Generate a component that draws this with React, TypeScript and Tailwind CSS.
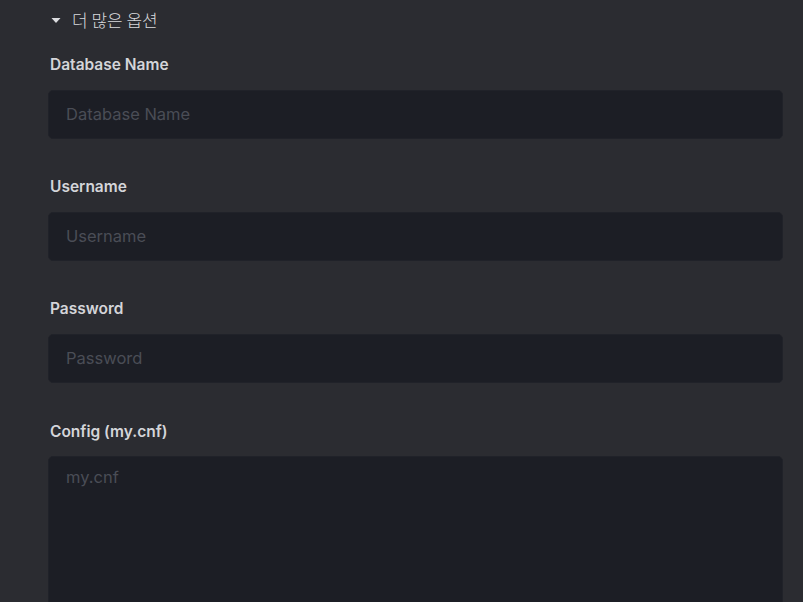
import { useState } from 'react';

const fields = [
    { name: 'dbName', label: 'Database Name', placeholder: 'Database Name', type: 'text' },
    { name: 'username', label: 'Username', placeholder: 'Username', type: 'text' },
    { name: 'password', label: 'Password', placeholder: 'Password', type: 'password' },
];

export default function App() {
    const [open, setOpen] = useState(true);
    const [form, setForm] = useState<Record<string, string>>({ dbName: '', username: '', password: '', config: '' });

    const handleChange = (e: React.ChangeEvent<HTMLInputElement | HTMLTextAreaElement>) => {
        setForm({ ...form, [e.target.name]: e.target.value });
    };

    return (
        <div className="min-h-screen bg-[#2b2c31] text-[#d6d7db] font-['Inter','Noto_Sans_CJK_KR',sans-serif] overflow-hidden">
            <div className="pl-12 pr-5 pt-[10px]">
                <button onClick={() => setOpen(!open)} className="flex items-center h-5 pl-[3px] text-[17px] text-[#d8d9dc]">
                    <svg width="10" height="7" viewBox="0 0 10 7" className={`mr-[11px] ${open ? '' : '-rotate-90'}`}>
                        <path d="M0.5 1 L9.5 1 L5 6 Z" fill="#dcdde0" />
                    </svg>
                    <span className="font-['Noto_Sans_CJK_KR',sans-serif] font-light">더 많은 옵션</span>
                </button>

                {open && (
                    <div className="pt-6">
                        {fields.map(f => (
                            <div key={f.name} className="mb-[37px]">
                                <label className="block pl-[2px] h-5 leading-5 text-[15.5px] font-semibold text-[#d4d5d9] mb-[16px] pt-[1px]">{f.label}</label>
                                <input
                                    type={f.type}
                                    name={f.name}
                                    value={form[f.name]}
                                    onChange={handleChange}
                                    placeholder={f.placeholder}
                                    className="w-full h-[49px] px-[17px] pb-[1px] rounded-[5px] bg-[#1c1e25] border border-[#202229] text-[16.5px] text-[#d4d5d9] placeholder:text-[#4a4d56] outline-none font-['Inter',sans-serif]"
                                />
                            </div>
                        ))}
                        <div>
                            <label className="block pl-[2px] h-5 leading-5 text-[15.5px] font-semibold text-[#d4d5d9] mb-[16px] pt-[2px]">Config (my.cnf)</label>
                            <textarea
                                name="config"
                                value={form.config}
                                onChange={handleChange}
                                placeholder="my.cnf"
                                className="w-full h-[200px] px-[17px] py-[8px] rounded-[5px] bg-[#1c1e25] border border-[#202229] text-[16.5px] text-[#d4d5d9] placeholder:text-[#4a4d56] outline-none resize-none font-['Inter',sans-serif]"
                            />
                        </div>
                    </div>
                )}
            </div>
        </div>
    );
}
